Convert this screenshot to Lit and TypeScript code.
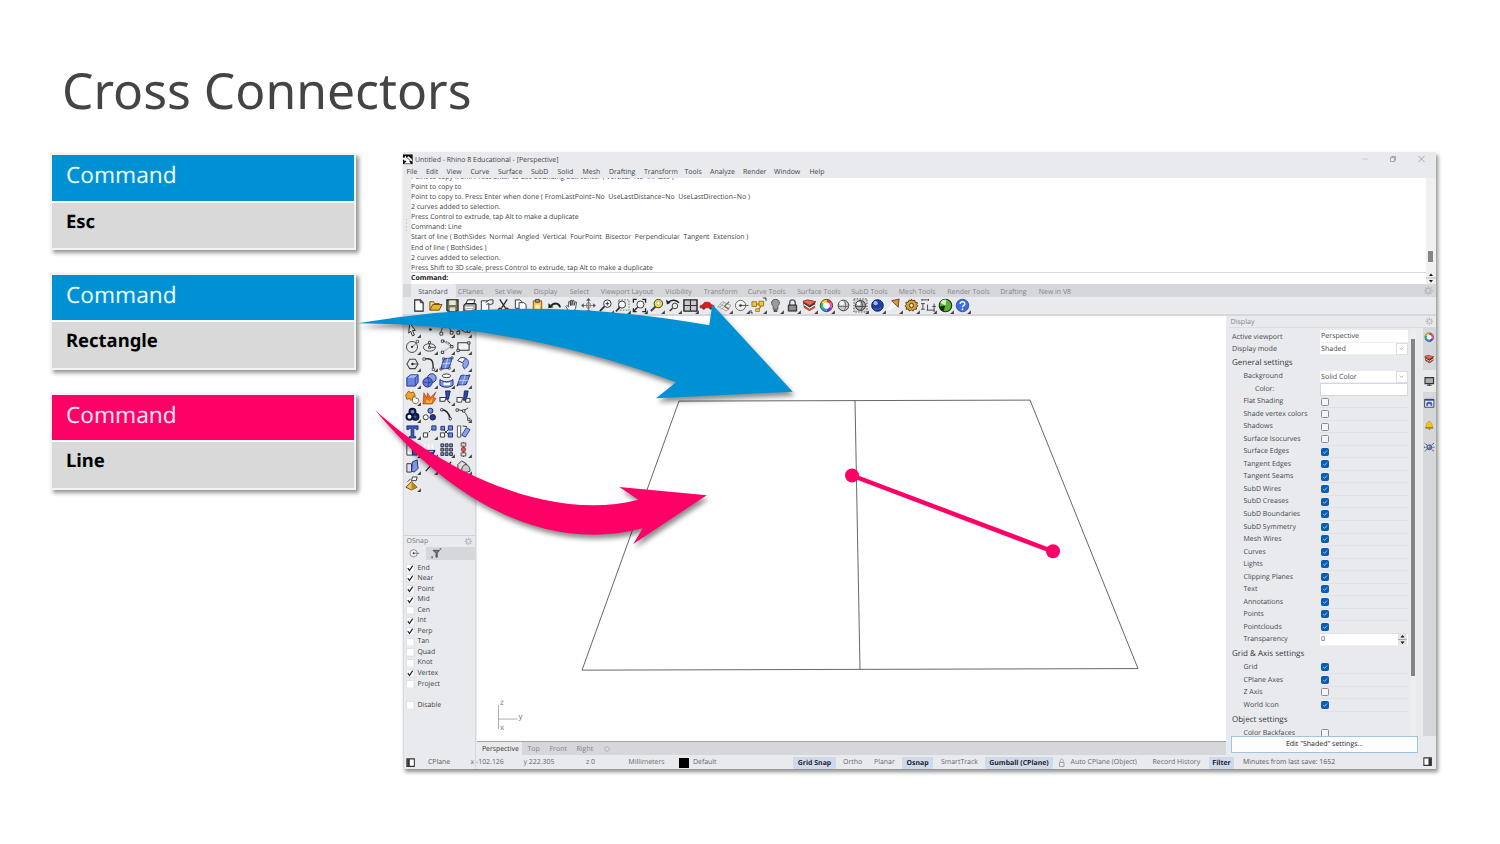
import { LitElement, html, svg, css, nothing, TemplateResult } from "lit";
import { customElement, property } from "lit/decorators.js";

type Glyph = TemplateResult;

const G: Record<string, Glyph> = {
  file: svg`<path d="M4 2h6l3 3v9H4z" fill="#fff" stroke="#222" stroke-width="1.2"/><path d="M10 2v3h3" fill="none" stroke="#222"/>`,
  open: svg`<path d="M2 13V4h4l1 2h5v2" fill="#f7dd7a" stroke="#6b4c0c"/><path d="M2 13l3-6h10l-3 6z" fill="#eab52c" stroke="#6b4c0c"/>`,
  save: svg`<path d="M2 2h12v12H3l-1-1z" fill="#77744e" stroke="#222" stroke-width="1.2"/><path d="M4.500 2.500h7v5h-7z" fill="#e9e9e0"/><path d="M5 10h6v4H5z" fill="#ddd"/>`,
  print: svg`<path d="M4 7l2-5h8l-2 5" fill="#fff" stroke="#222"/><path d="M2 8l2-2h10l1 1v5l-2 2H2z" fill="#aaa" stroke="#222" stroke-width="1.200"/><path d="M3 10h9M4 12.500h7" stroke="#fff" stroke-width="1.200"/>`,
  note: svg`<path d="M2.500 3h8v11h-8z" fill="#fff" stroke="#333"/><path d="M7 5l4-3h4v4l-3 1-2-1-2 1" fill="#eee" stroke="#333"/>`,
  cut: svg`<path d="M4 1.500l6 9M12 1.500l-6 9" stroke="#222" stroke-width="1.300" fill="none"/><circle cx="4.500" cy="12.500" r="1.700" fill="none" stroke="#222" stroke-width="1.300"/><circle cx="11.500" cy="12.500" r="1.700" fill="none" stroke="#222" stroke-width="1.300"/>`,
  copy: svg`<path d="M2.500 2h5l2 2v7h-7z" fill="#fff" stroke="#333"/><path d="M6.500 5h5l2.500 2v7H6.500z" fill="#fff" stroke="#333"/>`,
  paste: svg`<path d="M3.500 3h9v11.500h-9z" fill="#efc044" stroke="#8a5b10"/><path d="M6 1.500h4v3H6z" fill="#999" stroke="#444"/><path d="M5.500 7h5v6h-5z" fill="#fbe9a8"/>`,
  undo: svg`<path d="M14 10c-1-5-6-5-9.500-2" fill="none" stroke="#222" stroke-width="2"/><path d="M1.500 5.500l0 5.500 5.500-1z" fill="#222"/>`,
  hand: svg`<path d="M5 14L2 9l1-1 2 1.500V4l1.300-.5L7 8V2.500h1.500V8l.8-5.500 1.400.3V8l1.500-4 1.200.5-1 6.500-2 3z" fill="#fff" stroke="#333" stroke-width=".9"/>`,
  orbit: svg`<path d="M8 2v12M2 8h12" stroke="#777" stroke-width="1"/><path d="M8 0l2.500 3h-5zM8 16l2.500-3h-5zM0 8l3-2.500v5zM16 8l-3-2.500v5z" fill="#555"/><ellipse cx="8" cy="8" rx="2" ry="3.500" fill="none" stroke="#777"/>`,
  zoom: svg`<circle cx="10" cy="6" r="4" fill="#f7f7f7" stroke="#333"/><path d="M7 9l-5 5" stroke="#333" stroke-width="2"/><path d="M8 6h4M10 4v4" stroke="#333"/>`,
  zoomwin: svg`<path d="M4 2h11v11H4z" fill="none" stroke="#666" stroke-dasharray="1.500 1.500"/><circle cx="7.500" cy="7" r="3.800" fill="#f7f7f7" stroke="#333"/><path d="M5 10l-4 4.500" stroke="#333" stroke-width="1.800"/>`,
  zoomext: svg`<path d="M1.500 5V1.500H5M11 1.500h3.500V5M14.500 11v3.500H11M5 14.500H1.500V11" fill="none" stroke="#222" stroke-width="1.400"/><circle cx="9" cy="7" r="3.800" fill="#f7f7f7" stroke="#333"/><path d="M6 10l-4 4" stroke="#333" stroke-width="1.600"/>`,
  zoomsel: svg`<circle cx="10" cy="6" r="4.500" fill="#f2e03c" stroke="#333"/><circle cx="10" cy="5.500" r="1.900" fill="#fff" stroke="#997" stroke-width=".6"/><path d="M7 9l-5 5" stroke="#444" stroke-width="2.200"/>`,
  undoview: svg`<path d="M2 5c4-4 9-3 12 0" fill="none" stroke="#222" stroke-width="1.500"/><path d="M0 2l1 5 4-2z" fill="#222"/><circle cx="9.500" cy="8.500" r="3" fill="#eee" stroke="#333"/><path d="M7 11l-3 3" stroke="#333" stroke-width="1.600"/>`,
  views: svg`<path d="M1 2h14v12H1z" fill="#c9cbcf" stroke="#222" stroke-width="1.500"/><path d="M8 2v12M1 8h14" stroke="#333" stroke-width="1.200"/>`,
  car: svg`<path d="M0 8.500l3-1.500 2-2.500h5l2 2.500 3 1v2.500H0z" fill="#e01b20" stroke="#8c0d10" stroke-width=".6"/><circle cx="4" cy="11" r="1.500" fill="#444"/><circle cx="11.500" cy="11" r="1.500" fill="#444"/>`,
  cplane: svg`<path d="M1 9l5-5 9 4-5 6z" fill="#eee" stroke="#888" stroke-width=".8"/><path d="M3.500 7l9 4M10.500 6L5.500 11.500M8 5L3 10" stroke="#888" stroke-width=".7"/><path d="M8 9l5-5" stroke="#3a9a3a" stroke-width="1.300"/><path d="M8 9l5 3" stroke="#d33" stroke-width="1.300"/>`,
  circ: svg`<circle cx="7" cy="8" r="5.500" fill="#f3f3f3" stroke="#555" stroke-width=".9"/><path d="M7 8h8.500" stroke="#555" stroke-width="1"/><circle cx="7" cy="8" r="1.400" fill="#333"/>`,
  sel: svg`<path d="M1 4h5v5H1z" fill="#f6c53a" stroke="#9a7313"/><path d="M8.500 3.500h5v5h-5z" fill="#f6c53a" stroke="#9a7313"/><path d="M6 6.500h2.500M11 9l-4 4" fill="none" stroke="#9a7313" stroke-width="1.200"/><path d="M5 11.500h4v3H5z" fill="#f6c53a" stroke="#9a7313" stroke-width=".8"/><path d="M13 0h3v3M0 13v3h2" fill="none" stroke="#222"/>`,
  bulb: svg`<path d="M8 1.500c5 0 5 5 2.500 7.500v3h-5V9C3 6.500 3 1.500 8 1.500z" fill="#9a9c9c" stroke="#555"/><path d="M6 12.500h4v2.500H6z" fill="#555"/>`,
  lock: svg`<path d="M5 8V5c0-4 6-4 6 0v3" fill="none" stroke="#555" stroke-width="1.500"/><path d="M3.500 7.500h9V14h-9z" fill="#777" stroke="#222"/><path d="M5 9.500h6M5 11.500h6" stroke="#bbb" stroke-width=".8"/>`,
  layers: svg`<path d="M1 4l7 4 6-4v6l-6 4-6-4z" fill="#3a3a3a"/><path d="M1 3.500l5-1.500 9 2-7 4z" fill="#f0694c" stroke="#7a2015" stroke-width=".8"/><path d="M2 7l6 4 6-3.500" fill="none" stroke="#fff" stroke-width="1.200"/><path d="M2 9.500l6 3.500 6-3.500" fill="none" stroke="#e74a2d" stroke-width="1.500"/>`,
  wheel: svg`<g fill="none" stroke-width="3"><path d="M8 3a5 5 0 0 1 4.300 2.500" stroke="#f33"/><path d="M12.300 5.500a5 5 0 0 1 0 5" stroke="#e5b"/><path d="M12.300 10.500A5 5 0 0 1 8 13" stroke="#73e"/><path d="M8 13a5 5 0 0 1-4.300-2.500" stroke="#1ad"/><path d="M3.700 10.500a5 5 0 0 1 0-5" stroke="#2c5"/><path d="M3.700 5.500A5 5 0 0 1 8 3" stroke="#fd1"/></g><circle cx="8" cy="8" r="6.600" fill="none" stroke="#333" stroke-width=".9"/><circle cx="8" cy="8" r="3.300" fill="#fff"/>`,
  sphere: svg`<circle cx="8" cy="8" r="5.700" fill="#c9cacc" stroke="#333"/><path d="M2.500 9h11M8.500 2.500c2.500 3 2.500 8 0 11" fill="none" stroke="#666"/><circle cx="6" cy="5.500" r="2.200" fill="#fff"/>`,
  ghost: svg`<path d="M1 1h14v14H1z" fill="#d2d3d6" stroke="#444" stroke-dasharray="1.500 1.500"/><circle cx="8" cy="8" r="5.300" fill="#b0b0b0" stroke="#222"/><path d="M8.500 3c2 3 2 7 0 10M3 9h10" stroke="#444" fill="none"/><circle cx="6" cy="6" r="2" fill="#fff"/>`,
  blue: svg`<circle cx="8" cy="8" r="6.200" fill="#1d3f9f" stroke="#0b1c55"/><circle cx="6" cy="5.500" r="2.300" fill="#9fb9f4"/><path d="M4 11c3 2 6 1 8-1" stroke="#4c72d8" fill="none"/>`,
  spot: svg`<path d="M0 14L6 3l5 6z" fill="#fff" opacity=".8"/><path d="M5 3l8-2-1 9z" fill="#e8922f" stroke="#333" stroke-width=".8"/>`,
  gearGold: svg`<path d="M8 1l1 2 2.500-.8.5 2.300 2.500.5-.8 2L15 8.500l-1.800 1.300.3 2.200-2.500 0-1.200 2-2-1.300L5.500 14l-.8-2.200-2.500.2.500-2.400L1 8.500l1.500-1.500L2 4.500l2.500 0L5.500 2l2 1z" fill="#d9a038" stroke="#4b3408" stroke-width=".9"/><circle cx="8" cy="8" r="2.200" fill="#f5e7bd" stroke="#4b3408"/>`,
  dims: svg`<path d="M1 2h7M1 1v2M8 1v2M2 6v6M0 6h4M0 12h4M6 13h9M7 7v6M14 6v9M12 9h4" stroke="#444" fill="none" stroke-width="1"/>`,
  render: svg`<circle cx="8" cy="8" r="6.700" fill="#5db336" stroke="#14330b" stroke-width="1.200"/><path d="M8 8L2.500 5A6.500 6.500 0 0 1 9 1.800z" fill="#d8f0cc"/><path d="M8 8l-6.300 1a6.500 6.500 0 0 0 4 5.500z" fill="#16300e"/>`,
  help: svg`<circle cx="8" cy="8" r="6.700" fill="#3d6be0" stroke="#1c3a94" stroke-width=".8"/><path d="M5.500 6.500c0-3.500 5.300-3.300 5 0-.2 1.500-2.500 1.500-2.500 3.500" fill="none" stroke="#fff" stroke-width="1.500"/><circle cx="8" cy="12.200" r="1" fill="#fff"/>`,
  arrow: svg`<path d="M5 1l6 8H8l2 5-2 .8-2-5L4 12z" fill="#fff" stroke="#222"/>`,
  dot: svg`<circle cx="9" cy="8" r="1.400" fill="#222"/>`,
  poly: svg`<path d="M2 12C3 2 10 2 13 10" fill="none" stroke="#333"/><path d="M1 11h3v3H1zM6 2h3v3H6zM12 10h3v3h-3z" fill="#fff" stroke="#222" stroke-width=".9"/>`,
  curve: svg`<path d="M2 11c4-9 7 6 12-3" fill="none" stroke="#333"/><path d="M1 10h3v3H1zM12 8h3v3h-3z" fill="#fff" stroke="#222" stroke-width=".9"/>`,
  circle: svg`<circle cx="7.500" cy="8.500" r="5.900" fill="none" stroke="#444" stroke-width="1"/><path d="M8 8.500l5-5" stroke="#555" stroke-width=".8"/><circle cx="7.500" cy="8.500" r="1.200" fill="#333"/><path d="M12 1.500h2.500V4H12z" fill="#fff" stroke="#333" stroke-width=".8"/>`,
  ellipse: svg`<ellipse cx="8" cy="9" rx="6.500" ry="4" fill="none" stroke="#444" stroke-width="1"/><path d="M8 9V3.500M8 9h6" stroke="#444"/><path d="M7 2.500h2V5H7zM7 8h2v2H7z" fill="#fff" stroke="#333" stroke-width=".9"/>`,
  arc: svg`<path d="M4 2l9 6-9 6" fill="none" stroke="#888" stroke-width=".8"/><path d="M4 2c5 1 9 3 9 6" fill="none" stroke="#222" stroke-width="1.100" stroke-dasharray="2 1"/><path d="M2.500 1h2.500v2.500H2.500zM2.500 13H5v2.500H2.500zM12.500 7H15v2.500h-2.500z" fill="#fff" stroke="#222" stroke-width=".9"/>`,
  rect: svg`<path d="M2 4h12v8H2z" fill="#f4f4f4" stroke="#333" stroke-width="1.100"/><path d="M1 11h2.500v2.500H1zM12.500 3H15v2.500h-2.500z" fill="#fff" stroke="#222" stroke-width=".9"/>`,
  hexa: svg`<path d="M2 8.500l3-5h6l3 5-3 5H5z" fill="none" stroke="#444" stroke-width="1.100"/><path d="M8 8.500h6" stroke="#444"/><circle cx="8" cy="8.500" r="1.300" fill="#222"/>`,
  fillet: svg`<path d="M2 3h4c5 0 6 3 6 11" fill="none" stroke="#333" stroke-width="1.500"/><path d="M1 2h2.500v2.500H1zM11 13h2.500v2.500H11z" fill="#fff" stroke="#333" stroke-width=".8"/>`,
  srf: svg`<path d="M5 3l9-1-3 11-9 1z" fill="#6f87dd" stroke="#1d2f80"/><path d="M3.500 8.500l9-1M9.500 2.500l-3 11" stroke="#cdd6fa"/><path d="M4 2h2v2H4zM13 1h2v2h-2zM1 13h2v2H1zM10 12h2v2h-2z" fill="#fff" stroke="#222" stroke-width=".8"/>`,
  revolve: svg`<path d="M2 5c2-5 9-4 11 0 1 3 0 6-4 9l-2-4c1-1 1-2 0-3z" fill="#8fa2ec" stroke="#1d2f80" stroke-width=".9"/><path d="M2 5c2-4 6-4 8-2L7 7z" fill="#fff" stroke="#333" stroke-width=".9"/>`,
  box: svg`<path d="M2 5l4-3h8v8l-3 4H2z" fill="#6d86e4" stroke="#1b2d7d"/><path d="M2.500 5l4-2.500h7L11 5z" fill="#a9b9f5"/><path d="M11 5v9M11 5l3-3" fill="none" stroke="#1b2d7d" stroke-width=".7"/>`,
  spheres: svg`<circle cx="10.500" cy="5.500" r="4.700" fill="#8da0ec" stroke="#1b2d7d"/><circle cx="6" cy="10" r="5" fill="#5f7add" stroke="#1b2d7d"/><path d="M1.500 9c3 2 6 2 9 0M6 5c2 3 2 7 0 10" fill="none" stroke="#1b2d7d" stroke-width=".7"/>`,
  tube: svg`<path d="M1 7c4 3 10 3 14 0v6c-4 3-10 3-14 0z" fill="#7f95e6" stroke="#1b2d7d"/><ellipse cx="8" cy="3" rx="4.500" ry="2" fill="#fff" stroke="#333"/><path d="M5 10c2 1 5 1 7 0v3H5z" fill="#fff"/>`,
  patch: svg`<path d="M5 3c3-2 5 1 10-1l-4 10c-4 2-7-1-10 2z" fill="#6f87dd" stroke="#1d2f80"/><path d="M3 8.500c3-2 6 1 10-1M10 2.500L6.500 12.500" fill="none" stroke="#c6d0fa"/>`,
  puzzle: svg`<path d="M1 5l3-4 2 2 3-1 2 4-2 1 1 3-4 1-1-2-3 1-1-3z" fill="#f0a52b" stroke="#7a4907" stroke-width=".8"/><path d="M8 8l3-1 1 2 2 0 1 3-3 3-3-1-1-2z" fill="#fff" stroke="#7a4907" stroke-width=".8"/>`,
  explode: svg`<path d="M1 15L2 3l3 5 1-5 3 5 6-6-3 6 3 1-4 6z" fill="#e9701c" stroke="#8c3506" stroke-width=".6"/><path d="M4 14l1-4 3 2 4-4-2 6z" fill="#f9b041"/>`,
  trim: svg`<path d="M7 1h5l-2 9H8z" fill="#2b49b0" stroke="#142566"/><path d="M1 8h7l-2 4H1zM9 11l3 3" fill="#fff" stroke="#333" stroke-width="1.100"/>`,
  split: svg`<path d="M9 1h4l-2 10H8z" fill="#2b49b0" stroke="#142566"/><path d="M1 8h6l-1 5H1zM11 9h4v4h-5z" fill="#fff" stroke="#333"/>`,
  boolU: svg`<g fill="#16224f" stroke="#0a1230" stroke-width="1.500"><circle cx="8" cy="5" r="3.500"/><circle cx="4.800" cy="10.500" r="3.500"/><circle cx="11.200" cy="10.500" r="3.500"/></g><circle cx="8" cy="5" r="1.900" fill="#7992e8"/><circle cx="4.800" cy="10.500" r="2.100" fill="#fff"/><circle cx="11" cy="10.500" r="1.300" fill="#425bc0"/>`,
  boolD: svg`<circle cx="9" cy="4" r="2.700" fill="#7992e8" stroke="#16224f"/><circle cx="4" cy="11" r="2.700" fill="#fff" stroke="#333"/><circle cx="11.500" cy="11" r="3" fill="#1f3590" stroke="#16224f"/>`,
  bend: svg`<path d="M2 3c6 0 9 4 10 10" fill="none" stroke="#222" stroke-width="1.600"/><circle cx="3" cy="3" r="1.400" fill="#fff" stroke="#222"/><circle cx="12" cy="12.500" r="1.400" fill="#fff" stroke="#222"/>`,
  pts: svg`<path d="M1 3c6 0 11 3 12 11M8 4l5-3" fill="none" stroke="#333"/><path d="M0 2h2.500v2.500H0zM7 3h2.500v2.500H7zM12.500 12H15v2.500h-2.500z" fill="#fff" stroke="#222" stroke-width=".8"/>`,
  type: svg`<path d="M2 2h12v4h-2l-1-1.500H9.500V13l2 .5V15h-7v-1.500l2-.5V4.500H5L4 6H2z" fill="#3c5bc8" stroke="#142566" stroke-width=".8"/>`,
  move: svg`<path d="M5 11l6-6" stroke="#333" stroke-dasharray="2 1"/><path d="M1.500 9.500H6v4.500H1.500z" fill="#fff" stroke="#333"/><path d="M10.500 2H15v4.500h-4.500z" fill="#6f87dd" stroke="#1d2f80"/>`,
  copies: svg`<path d="M4 12l8-8M4 5l8 8" stroke="#333"/><path d="M1.500 9.500H6V14H1.500z" fill="#fff" stroke="#333"/><path d="M10 2h4.500v4.500H10zM2 2.500h4v4H2zM10 9.500h4.500V14H10z" fill="#6f87dd" stroke="#1d2f80"/>`,
  rotate: svg`<path d="M1.500 2H5v12H1.500z" fill="#fff" stroke="#444" stroke-width=".9"/><path d="M6 12L11 4l4 2-5 8z" fill="#8fa2ec" stroke="#1d2f80" stroke-width=".9"/><path d="M7 2l5 1" stroke="#333"/>`,
  scale: svg`<path d="M2 3h6v11H2z" fill="#fff" stroke="#333"/><path d="M8 5h5v9H8z" fill="#4666cf" stroke="#1d2f80"/>`,
  rail: svg`<path d="M3 8V2M7 8V2M11 8V2" stroke="#fff" stroke-width="1.200"/><path d="M1 9h13l-2 4H3z" fill="#2e4db8" stroke="#142566"/><path d="M3 10h9" stroke="#cdd6fa"/>`,
  array: svg`<g fill="#7f95e6" stroke="#222" stroke-width=".9"><path d="M2 2h3v3H2zM6.700 2h3v3h-3zM11.400 2h3v3h-3zM2 6.700h3v3H2zM6.700 6.700h3v3h-3zM11.400 6.700h3v3h-3zM2 11.400h3v3H2zM6.700 11.400h3v3h-3zM11.400 11.400h3v3h-3z"/></g>`,
  align: svg`<path d="M8 0v16" stroke="#d22" stroke-width="1.200"/><path d="M5.500 1h5v3.500h-5zM5.500 11.500h5V15h-5z" fill="#f2caca" stroke="#444" stroke-width=".9"/><circle cx="8" cy="8" r="2.300" fill="#e55" stroke="#444" stroke-width=".9"/>`,
  sheets: svg`<path d="M2 5h5v9H2z" fill="#d9dff8" stroke="#333"/><path d="M8 3l5-2 1 9-4 4-3-1z" fill="#7f95e6" stroke="#1d2f80"/>`,
  line: svg`<path d="M4 13L13 3" stroke="#222" stroke-width="1.300"/>`,
  solids: svg`<path d="M2 6l4-4 5 3v5l-4 4-5-3z" fill="#ddd" stroke="#333"/><path d="M6 13c0-4 2-7 4.500-7s4.500 3 4.500 7c-3 1.500-6 1.500-9 0z" fill="#c9cacc" stroke="#333"/>`,
  pyramid: svg`<path d="M7 6l6 6-6 3-6-3z" fill="#edc54f" stroke="#6d500c"/><path d="M7 6v9l6-3z" fill="#b8891f"/><path d="M8 1h5l-1 4H7z" fill="#fff" stroke="#333"/><path d="M6 3l-3 3" stroke="#333"/>`,
  gear: svg`<g stroke="#b8babf" stroke-width="2" fill="none"><circle cx="8" cy="8" r="3.500"/><path d="M8 1v3M8 12v3M1 8h3M12 8h3M3 3l2 2M11 11l2 2M13 3l-2 2M5 11l-2 2"/></g>`,
  screen: svg`<path d="M1.500 2.500h13v9h-13z" fill="#a9acb0" stroke="#333" stroke-width="1.700"/><path d="M4.500 14h7M8 11v3" stroke="#333" stroke-width="1.800"/>`,
  book: svg`<path d="M1 2h14v12H1z" fill="#e9edf9" stroke="#223" stroke-width="1.200"/><path d="M1 2h14v2H1z" fill="#223c86"/><path d="M3.500 12V8c1-3 8-3 9 0v4H10V9.500H6V12z" fill="#3f62cf"/>`,
  bell: svg`<path d="M2.500 12C4 10 3 3 8 2c5 1 4 8 5.500 10z" fill="#f7c510" stroke="#b08205" stroke-width=".8"/><path d="M2 12h12M7 14h2.500" stroke="#6b4c0c" stroke-width="1.200"/>`,
  nodes: svg`<circle cx="8" cy="8" r="3.800" fill="#5b78d0" stroke="#223" stroke-width=".8"/><path d="M1 2l4 3M15 2l-4 3M1 14l4-3M15 14l-4-3M0 8h3M13 8h3" stroke="#223" stroke-width="1.400" stroke-dasharray="1.500 1"/><circle cx="7" cy="7" r="1.300" fill="#cdd6fa"/>`,
  funnel: svg`<path d="M3 3.500h10L9.500 8v6h-2V8z" fill="#777" stroke="#333"/><path d="M13 1h2v2M2 12l-1 3h2" fill="none" stroke="#333"/>`,
  side: svg`<path d="M1.500 1.500h13v13h-13z" fill="#fff" stroke="#333" stroke-width="1.800"/><path d="M2 2h4.500v12H2z" fill="#333"/>`,
  sideR: svg`<path d="M1.500 1.500h13v13h-13z" fill="#fff" stroke="#333" stroke-width="1.800"/><path d="M9.500 2H14v12H9.500z" fill="#333"/>`,
  rhino: svg`<path d="M0 0h16v16H0z" fill="#111"/><path d="M0 5l2 1 2-4 2 4 3-3 5 4 2 5-4-2-2 1 3 4H2l4-4-4-1-2-2z" fill="#fff"/><path d="M7 6l4 3" stroke="#111" stroke-width="1.300"/>`,
};

@customElement("cad-icon")
class CadIcon extends LitElement {
  @property() name = "";
  @property({ type: Boolean }) more = false;
  static styles = css`
    :host { display: flex; flex: none; width: 17px; height: 17px; align-items: center; justify-content: center; }
    svg { width: 88%; height: 88%; display: block; overflow: visible; }
  `;
  render() {
    return html`<svg viewBox="0 0 16 16">${G[this.name] ?? nothing}${this.more ? svg`<path d="M17 13v4h-4z" fill="#444"/>` : nothing}</svg>`;
  }
}

@customElement("command-card")
class CommandCard extends LitElement {
  @property() name = "";
  @property() tone = "blue";
  static styles = css`
    :host { display: block; box-sizing: border-box; width: 306px; height: 97px; border: 2px solid #f1f3f4; background: #fff;
      box-shadow: 2.500px 3px 4px rgba(0,0,0,.42); font-family: "Noto Sans", sans-serif; }
    .head { height: 45.500px; line-height: 39.500px; padding-left: 14px; font-size: 22.600px; color: #e6fbff; background: #0091d4; margin-bottom: 2px; }
    .head.pink { background: #ff0066; color: #ffe3f1; }
    .body { height: 45.500px; line-height: 37px; padding-left: 14px; font-size: 18.450px; font-weight: 700; color: #000; background: #d9d9d9; }
  `;
  render() {
    return html`<div class="head ${this.tone}">Command</div><div class="body">${this.name}</div>`;
  }
}

const MENU: [string, number][] = [["File", 19.5], ["Edit", 20.5], ["View", 24], ["Curve", 27.500], ["Surface", 33], ["SubD", 26.5], ["Solid", 25], ["Mesh", 26.5], ["Drafting", 35], ["Transform", 40.500], ["Tools", 25.500], ["Analyze", 33], ["Render", 31], ["Window", 35.500], ["Help", 30]];
const HISTORY = [
  "Point to copy from. Press Enter to use bounding box center ( Vertical=No  InPlace )",
  "Point to copy to",
  "Point to copy to. Press Enter when done ( FromLastPoint=No  UseLastDistance=No  UseLastDirection=No )",
  "2 curves added to selection.",
  "Press Control to extrude, tap Alt to make a duplicate",
  "Command: Line",
  "Start of line ( BothSides  Normal  Angled  Vertical  FourPoint  Bisector  Perpendicular  Tangent  Extension )",
  "End of line ( BothSides )",
  "2 curves added to selection.",
  "Press Shift to 3D scale, press Control to extrude, tap Alt to make a duplicate",
];
const TABS: [string, number][] = [["CPlanes", 37], ["Set View", 39], ["Display", 36], ["Select", 31], ["Viewport Layout", 64.500], ["Visibility", 38.500], ["Transform", 44], ["Curve Tools", 49.500], ["Surface Tools", 54], ["SubD Tools", 47.500], ["Mesh Tools", 48.500], ["Render Tools", 53], ["Drafting", 38.500], ["New in V8", 40]];
const BAR = "file open save print note cut copy paste undo hand orbit zoom zoomwin zoomext zoomsel undoview views car cplane circ sel bulb lock layers wheel sphere ghost blue spot gearGold dims render help".split(" ");
const NO_MORE = new Set(["file", "open", "save", "cut", "copy", "paste", "undo", "orbit", "car", "sphere", "dot", "explode", "split", "bend", "boolD", "rotate", "copies"]);
const PALETTE = "arrow dot poly curve circle ellipse arc rect hexa fillet srf revolve box spheres tube patch puzzle explode trim split boolU boolD bend pts type move copies rotate scale rail array align sheets line line solids pyramid".split(" ");
const SNAPS: [string, boolean][] = [["End", true], ["Near", true], ["Point", true], ["Mid", true], ["Cen", false], ["Int", true], ["Perp", true], ["Tan", false], ["Quad", false], ["Knot", false], ["Vertex", true], ["Project", false]];
type Row = { t: string; k: "text" | "drop" | "color" | "check" | "num" | "head"; v?: string; on?: boolean; lv?: number };
const c = (t: string, on: boolean): Row => ({ t, k: "check", on });
const ROWS: Row[] = [
  { t: "Active viewport", k: "text", v: "Perspective", lv: 0 },
  { t: "Display mode", k: "drop", v: "Shaded", lv: 0 },
  { t: "General settings", k: "head" },
  { t: "Background", k: "drop", v: "Solid Color" },
  { t: "Color:", k: "color", lv: 2 },
  c("Flat Shading", false), c("Shade vertex colors", false), c("Shadows", false), c("Surface Isocurves", false),
  c("Surface Edges", true), c("Tangent Edges", true), c("Tangent Seams", true), c("SubD Wires", true), c("SubD Creases", true),
  c("SubD Boundaries", true), c("SubD Symmetry", true), c("Mesh Wires", true), c("Curves", true), c("Lights", true),
  c("Clipping Planes", true), c("Text", true), c("Annotations", true), c("Points", true), c("Pointclouds", true),
  { t: "Transparency", k: "num", v: "0" },
  { t: "Grid & Axis settings", k: "head" },
  c("Grid", true), c("CPlane Axes", true), c("Z Axis", false), c("World Icon", true),
  { t: "Object settings", k: "head" },
  c("Color Backfaces", false),
];

@customElement("display-panel")
class DisplayPanel extends LitElement {
  static styles = css`
    :host { display: grid; grid-template-rows: 13px 406.500px 19px 14.500px; width: 207.500px; background: #e9eaee; color: #45474b; font-size: 7px; line-height: 12px; white-space: nowrap; }
    .title { display: flex; justify-content: space-between; align-items: center; padding: 0 2px 0 2px; color: #808288; font-size: 7.100px; line-height: 10px; height: 12px; box-sizing: border-box; background: #e9eaee; border-bottom: 1px solid #dcdde1; }
    .title cad-icon { width: 10px; height: 10px; }
    .main { display: grid; grid-template-columns: 182.500px 5px 7px 13px; min-height: 0; }
    .list { overflow: hidden; padding: 1.400px 3.500px 0 3.500px; }
    .row { display: grid; grid-template-columns: 87.500px 1fr; height: 12.530px; box-sizing: border-box; align-items: center; }
    .row > span { padding: .5px 0 0 11.500px; }
    .row.l0 > span { padding-left: 0; font-size: 7.100px; }
    .row.l2 > span { padding-left: 23px; }
    .val { height: 12.530px; display: flex; align-items: center; padding-left: 1.500px; box-sizing: border-box; border-bottom: 1px solid #dfe1e7; }
    .val.field { background: #fff; justify-content: space-between; border-color: #eef0f3; font-size: 7.100px; }
    .val.color { background: #fff; border: 1px solid #d5d7dc; }
    .head { height: 15.400px; line-height: 15.400px; font-size: 8px; color: #34363a; }
    .box { width: 8px; height: 8px; box-sizing: border-box; border: 1px solid #8b8d92; border-radius: 1.500px; background: #f4f5f7; }
    .box.on { background: #0a5db3; border-color: #0a5db3; display: flex; }
    .box svg { width: 6px; height: 6px; }
    .chev { width: 10px; height: 10px; border: 1px solid #dcdde0; display: grid; place-items: center; }
    .chev svg { width: 5px; height: 5px; }
    .spin { width: 9px; height: 11px; background: #e4e4e6; margin-right: 1px; }
    .spin svg { width: 9px; height: 11px; display: block; }
    .bar { background: #eeeeef; padding: 10px .5px 0 0; }
    .thumb { height: 337px; background: #858585; width: 4px; }
    .tabs { grid-column: 4; background: #d6d7db; display: flex; flex-direction: column; align-items: center; margin-top: -2.500px; }
    .tab { width: 13px; height: 21.900px; display: grid; place-items: center; }
    .tab.on { background: #e9eaee; }
    .tab cad-icon { width: 12px; height: 12px; }
    .foot { display: grid; grid-template-columns: 187px; padding: 0 0 2px 2.500px; }
    .edit { border: 1px solid #9fc3e2; background: #fdfdfd; color: #222; display: grid; place-items: center; font-size: 7px; padding-top: 1px; }
    .status { display: flex; justify-content: space-between; align-items: center; padding: 0 3px 0 14.500px; font-size: 6.900px; color: #55575b; }
    .status span { padding-top: 1.500px; }
    .status cad-icon { width: 10.500px; height: 10.500px; }
  `;
  private value(r: Row) {
    if (r.k === "check") return html`<div class="val"><i class="box ${r.on ? "on" : ""}">${r.on ? html`<svg viewBox="0 0 8 8"><path d="M1.500 4l2 1.700L6.800 2" fill="none" stroke="#cfe4fa" stroke-width="1"/></svg>` : nothing}</i></div>`;
    if (r.k === "color") return html`<div class="val color"></div>`;
    return html`<div class="val field">${r.v}${r.k === "drop" ? html`<i class="chev"><svg viewBox="0 0 8 8"><path d="M1 2.500l3 3 3-3" fill="none" stroke="#888"/></svg></i>` : nothing}${r.k === "num" ? html`<i class="spin"><svg viewBox="0 0 9 11"><path d="M4.500 1l2 2.500h-4zM4.500 10l2-2.500h-4z" fill="#111"/><path d="M0 5.500h9" stroke="#aaa"/></svg></i>` : nothing}</div>`;
  }
  render() {
    return html`
      <div class="title">Display<cad-icon name="gear"></cad-icon></div>
      <div class="main">
        <div class="list">
          ${ROWS.map((r) => r.k === "head" ? html`<div class="head">${r.t}</div>` : html`<div class="row l${r.lv ?? 1}"><span>${r.t}</span>${this.value(r)}</div>`)}
        </div>
        <div class="bar"><div class="thumb"></div></div>
        <div class="tabs">
          ${["wheel", "layers", "screen", "book", "bell", "nodes"].map((n) => html`<div class="tab ${n === "screen" ? "on" : ""}"><cad-icon name=${n}></cad-icon></div>`)}
        </div>
      </div>
      <div class="foot"><div class="edit">Edit "Shaded" settings...</div></div>
      <div class="status"><span>Minutes from last save: 1652</span><cad-icon name="sideR"></cad-icon></div>
    `;
  }
}

@customElement("cad-window")
class CadWindow extends LitElement {
  static styles = css`
    :host { display: grid; grid-template-rows: 14px 12px 94px 12px 13px 17px 2px 453px; width: 1033.500px; height: 617px; background: #e9eaee; color: #3b3d41;
      font: 7.200px/10px "Open Sans", "Noto Sans", sans-serif; text-rendering: geometricPrecision; box-shadow: 2px 3px 4px rgba(0,0,0,.45); white-space: nowrap; overflow: visible; }
    .title { display: flex; align-items: center; gap: 1.500px; padding-right: 10px; font-size: 6.950px; }
    .title cad-icon { width: 11px; height: 12px; }
    .title span { flex: 1; padding-top: 3px; }
    .title svg { width: 66px; height: 10px; }
    .menu { display: flex; align-items: center; padding: 2px 0 0 4px; font-size: 6.950px; }
    .hist { display: grid; grid-template-columns: 8px 1fr 10px; overflow: hidden; }
    .lines { background: #fff; overflow: hidden; display: flex; flex-direction: column; justify-content: flex-end; padding-left: .5px; font-size: 6.900px; line-height: 10.130px; white-space: pre; }
    .lines div:last-child { margin-bottom: -1.900px; }
    .scroll { background: #f0f0f0; padding: 73px 2px 0; }
    .scroll div { height: 11px; width: 5px; background: #868686; }
    .prompt { display: grid; grid-template-columns: 8px 1fr 10px; }
    .prompt b { background: #fff; border-top: 1px solid #d5d8e4; padding-left: .5px; color: #111; font-size: 6.900px; line-height: 12px; height: 11px; }
    .prompt svg { width: 10px; height: 12px; background: #eee; }
    .grip { display: grid; place-items: center; }
    .grip svg { width: 3px; height: 14px; }
    .tabs { background: #d6d7db; display: flex; color: #808288; line-height: 17px; font-size: 6.950px; }
    .tabs .on { margin-left: 8px; background: #e9eaee; color: #4d4f54; width: 45px; margin-right: .5px; text-align: center; height: 13px; border-radius: 2px 2px 0 0; }
    .tabs .end { margin-left: auto; width: 12px; height: 13px; margin-right: 2px; }
    .bar { display: flex; padding-left: 7px; }
    .edge { background: #d6d7db; }
    .work { display: grid; grid-template-columns: 74px 752px 207.500px; }
    .left { display: grid; grid-template-rows: 219px 12px 13px 1fr 14px; border-left: 1px solid #d8dae0; margin-right: 1.500px; border-right: 1px solid #d6d7db; box-sizing: border-box; width: 73px; }
    .palette { display: grid; grid-template-columns: repeat(4, 17px); grid-auto-rows: 17.150px; align-content: start; padding: 4.500px 0 0 .5px; }
    .osnap { display: flex; justify-content: space-between; align-items: center; border-top: 1px solid #d0d2d7; padding: 0 1px 0 3px; color: #77797e; font-size: 7px; }
    .osnap cad-icon { width: 10px; height: 10px; }
    .modes { background: #d6d7db; display: flex; }
    .modes div { width: 22px; display: grid; place-items: center; }
    .modes .on { background: #e9eaee; }
    .modes cad-icon { width: 12px; height: 12px; }
    .snaps { padding: 2.900px 0 0 2.500px; }
    .snap { display: flex; align-items: center; gap: 3px; height: 10.540px; font-size: 6.900px; }
    .snap span { padding-top: 1px; }
    .snap.off { margin-top: 10.500px; }
    .snap svg { width: 8.500px; height: 8.500px; display: block; flex: none; }
    .corner { display: flex; align-items: center; padding: 1.500px 0 0 2px; gap: 12px; font-size: 6.900px; color: #55575b; }
    .corner cad-icon { width: 10.500px; height: 10.500px; }
    .center { display: grid; grid-template-rows: 426px 13px 14px; }
    .view { background: #fff; border-bottom: 1px solid #a2a6a2; display: block; box-sizing: border-box; width: 749.500px; height: 426px; overflow: visible; }
    .view text { font: 8px "Open Sans", sans-serif; fill: #777; }
    .vtabs { background: #d6d7db; display: flex; color: #808288; font-size: 7px; line-height: 15px; width: 749.500px; }
    .vtabs .on { background: #e9eaee; color: #333; width: 39.500px; padding-left: 5.500px; margin-right: 6px; font-size: 6.850px; height: 13px; }
    .status { position: relative; z-index: 1; display: flex; align-items: center; font-size: 6.950px; color: #66686d; margin-left: -6px; padding-top: 1px; }
    .status b { background: #cfd9ee; color: #222; text-align: center; height: 12px; line-height: 13px; border-radius: 1px; }
    .status span { flex: none; padding-top: 1px; }
    .sw { width: 10px; height: 10px; background: #000; flex: none; margin-right: 4px; }
  `;
  private cell(t: string, w: number) { return html`<span style="flex:none;width:${w}px">${t}</span>`; }
  private chip(t: string, w: number, gap: number) { return html`<b style="flex:none;width:${w}px;margin-right:${gap}px">${t}</b>`; }
  private snap(t: string, on: boolean, cls = "") {
    return html`<div class="snap ${cls}"><svg viewBox="0 0 8.500 8.500"><path d="M.4.4h7.700v7.700H.4z" fill="#fff" stroke="#cdd5e4" stroke-width=".7"/>${on ? svg`<path d="M1.800 4.200l1.700 2.300L6.700 1.700" fill="none" stroke="#222" stroke-width="1.200"/>` : nothing}</svg><span>${t}</span></div>`;
  }
  private grip() {
    return html`<div class="grip"><svg viewBox="0 0 3 14"><path d="M1.500 1v13" stroke="#bfc1c6" stroke-width="1.200" stroke-dasharray="1.200 2.300"/></svg></div>`;
  }
  render() {
    return html`
      <div class="title"><cad-icon name="rhino"></cad-icon><span>Untitled - Rhino 8 Educational - [Perspective]</span>
        <svg viewBox="0 0 66 10" fill="none" stroke="#a3a5a9"><path d="M2 5h6" stroke="#c8cacd"/><path d="M30.500 3.500h4v4h-4zM31.500 2.500h4v4"/><path d="M58.500 2l6 6M64.500 2l-6 6"/></svg></div>
      <div class="menu">${MENU.map(([t, w]) => this.cell(t, w))}</div>
      <div class="hist">${this.grip()}<div class="lines">${HISTORY.map((l) => html`<div>${l}</div>`)}</div><div class="scroll"><div></div></div></div>
      <div class="prompt"><div></div><b>Command:</b><svg viewBox="0 0 10 12"><path d="M5 1.500l2 2.500H3zM5 10.500l2-2.500H3z" fill="#111"/><path d="M0 6h10" stroke="#bbb"/></svg></div>
      <div class="tabs"><span class="on">Standard</span>${this.cell("", 1.8)}${TABS.map(([t, w]) => this.cell(t, w))}<cad-icon class="end" name="gear"></cad-icon></div>
      <div class="bar">${BAR.map((n) => html`<cad-icon name=${n} ?more=${!NO_MORE.has(n)}></cad-icon>`)}</div>
      <div class="edge"></div>
      <div class="work">
        <div class="left">
          <div class="palette">${PALETTE.map((n) => html`<cad-icon name=${n} ?more=${!NO_MORE.has(n)}></cad-icon>`)}</div>
          <div class="osnap">OSnap<cad-icon name="gear"></cad-icon></div>
          <div class="modes"><div class="on"><cad-icon name="circ"></cad-icon></div><div><cad-icon name="funnel"></cad-icon></div></div>
          <div class="snaps">${SNAPS.map(([t, on]) => this.snap(t, on))}${this.snap("Disable", false, "off")}</div>
          <div class="corner"><cad-icon name="side"></cad-icon><span>CPlane</span></div>
        </div>
        <div class="center">
          <svg class="view" viewBox="477 316 749.500 426" preserveAspectRatio="none">
            <path d="M679 401.300L1030 400.300 1138 669.400 582 671zM855 400.800L860 670.200" fill="none" stroke="#333" stroke-width=".75"/>
            <path d="M498.500 706v24M498.500 720h19" fill="none" stroke="#999" stroke-width=".8"/>
            <text x="500" y="706">z</text><text x="518.500" y="720">y</text><text x="500" y="731">x</text>
          </svg>
          <div class="vtabs"><span class="on">Perspective</span>${this.cell("Top", 22)}${this.cell("Front", 27)}${this.cell("Right", 26)}
            <svg width="8" height="14" viewBox="0 0 8 14"><path d="M4 4.500v5M1.500 7h5" stroke="#a5a7ac" stroke-width="2.600"/><path d="M4 5v4M2 7h4" stroke="#eee"/></svg></div>
          <div class="status">${this.cell("x -102.126", 53)}${this.cell("y 222.305", 62.500)}${this.cell("z 0", 42.500)}${this.cell("Millimeters", 50.500)}<i class="sw"></i>${this.cell("Default", 100)}
            ${this.chip("Grid Snap", 43, 7)}${this.cell("Ortho", 31)}${this.cell("Planar", 28)}${this.chip("Osnap", 31, 8)}${this.cell("SmartTrack", 44)}${this.chip("Gumball (CPlane)", 68, 5.500)}
            <svg width="12" height="10" viewBox="0 0 12 10" fill="none" stroke="#a5a7ac"><path d="M.5 4.500h4.500v4H.5zM1.200 4.500v-2c0-2 3-2 3 0v2"/></svg>
            ${this.cell("Auto CPlane (Object)", 82)}${this.cell("Record History", 56.500)}${this.chip("Filter", 25, 0)}</div>
        </div>
        <display-panel></display-panel>
      </div>
    `;
  }
}

@customElement("app-root")
class AppRoot extends LitElement {
  static styles = css`
    :host { display: block; position: relative; width: 1500px; height: 844px; background: #fff; overflow: hidden; font-family: "Noto Sans", "Open Sans", sans-serif; text-rendering: geometricPrecision; }
    .slide { display: grid; grid-template-columns: 352.500px 1fr; grid-template-rows: 93px 1fr; padding: 59px 0 0 50px; }
    h1 { grid-column: 1 / 3; margin: 0 0 0 12px; font-size: 49.800px; line-height: 62px; font-weight: 400; color: #444; }
    .cards { display: flex; flex-direction: column; gap: 22.800px; padding-top: 1.200px; }
    .over { position: absolute; inset: 0; width: 1500px; height: 844px; }
    .arrow { filter: drop-shadow(2px 4px 2.500px rgba(0,0,0,.45)); }
  `;
  render() {
    return html`
      <div class="slide">
        <h1>Cross Connectors</h1>
        <div class="cards">
          <command-card name="Esc"></command-card>
          <command-card name="Rectangle"></command-card>
          <command-card name="Line" tone="pink"></command-card>
        </div>
        <cad-window></cad-window>
      </div>
      <svg class="over" viewBox="0 0 1500 844">
        <path class="arrow" fill="#0091d4" d="M357.500 323.300Q533 293 709.300 325.300L712.300 304.500 792.700 391.700 656 398.300 676 382.300Q520 324 357.500 323.300z"/>
        <path class="arrow" fill="#ff0066" d="M375.300 410.300C440 470 550 523 638.300 499.700L619.300 487 706.700 495.300 633.300 544 642.700 528.300C550 553 455 506 375.300 410.300z"/>
        <path d="M852 475.500L1053 551.500" stroke="#ff0066" stroke-width="4.500"/>
        <circle cx="852" cy="475.500" r="7" fill="#ff0066"/><circle cx="1053" cy="551.300" r="7" fill="#ff0066"/>
      </svg>
    `;
  }
}
